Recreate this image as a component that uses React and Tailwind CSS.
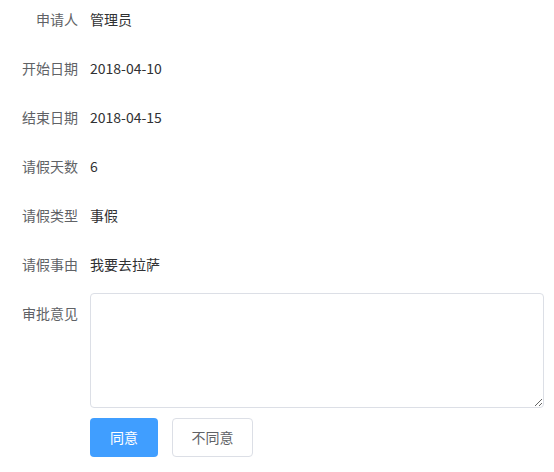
const rows = [
  ['申请人', '管理员'],
  ['开始日期', '2018-04-10'],
  ['结束日期', '2018-04-15'],
  ['请假天数', '6'],
  ['请假类型', '事假'],
  ['请假事由', '我要去拉萨'],
];

export default function App() {
  return (
    <div
      className="w-[554px] h-[472px] bg-white text-[14px] overflow-hidden"
      style={{ fontFamily: '"Noto Sans CJK SC", "Noto Sans", sans-serif' }}
    >
      <div className="flex flex-col gap-[9px] -mt-px">
        {rows.map(([label, value]) => (
          <div key={label} className="flex h-[40px] leading-[40px]">
            <div className="w-[90px] pr-[12px] text-right text-[#606266]">{label}</div>
            <div className="text-[#303133]">{value}</div>
          </div>
        ))}
        <div className="flex">
          <div className="w-[90px] pr-[12px] text-right text-[#606266] leading-[40px]">审批意见</div>
          <div className="flex flex-col gap-[10px]">
            <textarea className="w-[454px] h-[115px] border border-[#dcdfe6] rounded-[4px] px-[15px] py-[5px] outline-none resize-y" />
            <div className="flex gap-[14px]">
              <button className="w-[68px] h-[39px] rounded-[4px] bg-[#409eff] text-white text-[14px]">同意</button>
              <button className="w-[81px] h-[39px] rounded-[4px] border border-[#dcdfe6] bg-white text-[#606266] text-[14px]">不同意</button>
            </div>
          </div>
        </div>
      </div>
    </div>
  );
}
